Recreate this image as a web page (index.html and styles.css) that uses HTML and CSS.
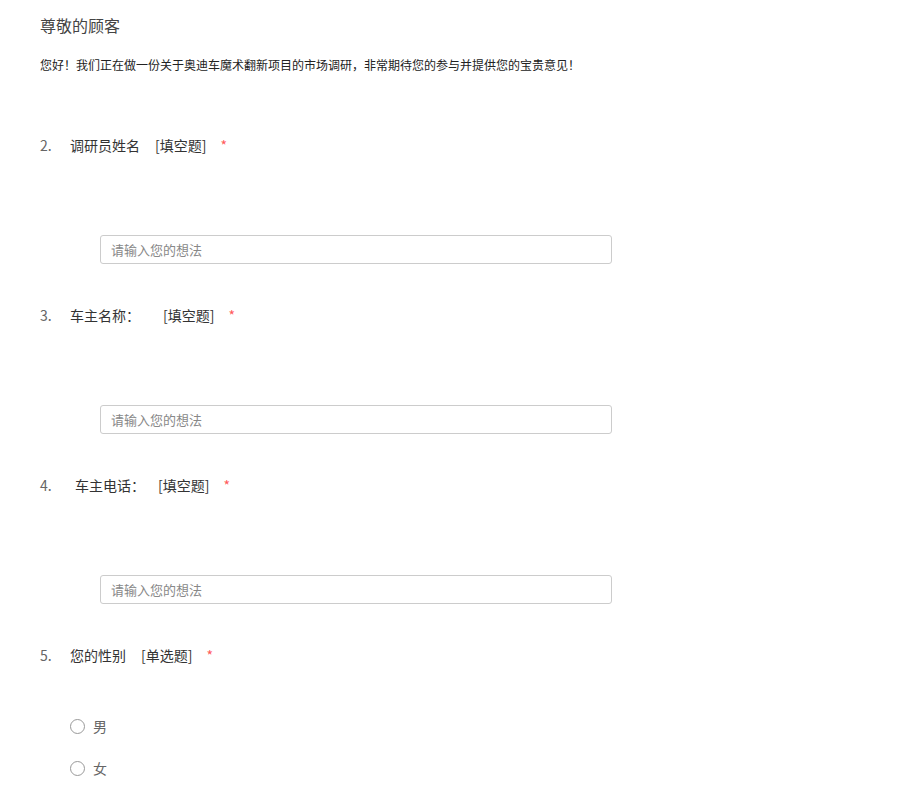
FILE: index.html
```html
<!DOCTYPE html>
<html lang="zh-CN">
<head>
<meta charset="utf-8">
<title>问卷</title>
<link rel="stylesheet" href="styles.css">
</head>
<body>
<div class="page">
  <h1 class="title">尊敬的顾客</h1>
  <p class="desc">您好！我们正在做一份关于奥迪车魔术翻新项目的市场调研，非常期待您的参与并提供您的宝贵意见！</p>

  <div class="questions">
    <div class="q">
      <div class="q-head">
        <span class="q-num">2.</span>
        <span class="q-title">调研员姓名</span>
        <span class="q-type">[填空题]</span>
        <span class="q-req">*</span>
      </div>
      <div class="q-body">
        <input class="text-input" type="text" placeholder="请输入您的想法">
      </div>
    </div>

    <div class="q">
      <div class="q-head">
        <span class="q-num">3.</span>
        <span class="q-title">车主名称：</span>
        <span class="q-type q-type-wide">[填空题]</span>
        <span class="q-req">*</span>
      </div>
      <div class="q-body">
        <input class="text-input" type="text" placeholder="请输入您的想法">
      </div>
    </div>

    <div class="q">
      <div class="q-head">
        <span class="q-num">4.</span>
        <span class="q-title q-title-indent">车主电话：</span>
        <span class="q-type q-type-narrow">[填空题]</span>
        <span class="q-req">*</span>
      </div>
      <div class="q-body">
        <input class="text-input" type="text" placeholder="请输入您的想法">
      </div>
    </div>

    <div class="q">
      <div class="q-head">
        <span class="q-num">5.</span>
        <span class="q-title">您的性别</span>
        <span class="q-type">[单选题]</span>
        <span class="q-req">*</span>
      </div>
      <div class="q-options">
        <label class="option"><span class="radio"></span><span class="option-text">男</span></label>
        <label class="option"><span class="radio"></span><span class="option-text">女</span></label>
      </div>
    </div>
  </div>
</div>
</body>
</html>
```

FILE: styles.css
```css
* { box-sizing: border-box; }

html, body {
  margin: 0;
  padding: 0;
  background: #fff;
}

body {
  font-family: "Noto Sans CJK SC", "Noto Sans", "Liberation Sans", sans-serif;
  color: #333;
}

.page {
  padding: 15px 0 0 40px;
}

.title {
  margin: 0;
  font-size: 16px;
  line-height: 20px;
  font-weight: normal;
  color: #444;
}

.desc {
  margin: 21px 0 0;
  font-size: 12px;
  line-height: 18px;
  color: #222;
}

.questions {
  margin-top: 61px;
  display: flex;
  flex-direction: column;
  gap: 41px;
}

.q-head {
  display: flex;
  align-items: center;
  height: 20px;
  font-size: 14px;
  line-height: 20px;
}

.q-num {
  width: 30px;
  color: #666;
}

.q-title {
  color: #333;
}

.q-title-indent {
  margin-left: 5px;
}

.q-type {
  margin-left: 15px;
  color: #333;
}

.q-type-wide {
  margin-left: 23px;
}

.q-type-narrow {
  margin-left: 13px;
}

.q-req {
  margin-left: 14px;
  color: #ff5a5a;
  font-size: 14px;
}

.q-body {
  margin-top: 80px;
  padding-left: 60px;
}

.text-input {
  display: block;
  width: 512px;
  height: 29px;
  border: 1px solid #ccc;
  border-radius: 3px;
  padding: 0 10px;
  font-family: inherit;
  font-size: 13px;
  color: #333;
  outline: none;
  background: #fff;
}

.text-input::placeholder {
  color: #888;
}

.q-options {
  margin-top: 51px;
  padding-left: 30px;
  display: flex;
  flex-direction: column;
  gap: 22px;
}

.option {
  display: flex;
  align-items: center;
  height: 20px;
}

.radio {
  width: 15px;
  height: 15px;
  border: 1px solid #999;
  border-radius: 50%;
  background: #fff;
}

.option-text {
  margin-left: 8px;
  font-size: 14px;
  color: #666;
}
```
